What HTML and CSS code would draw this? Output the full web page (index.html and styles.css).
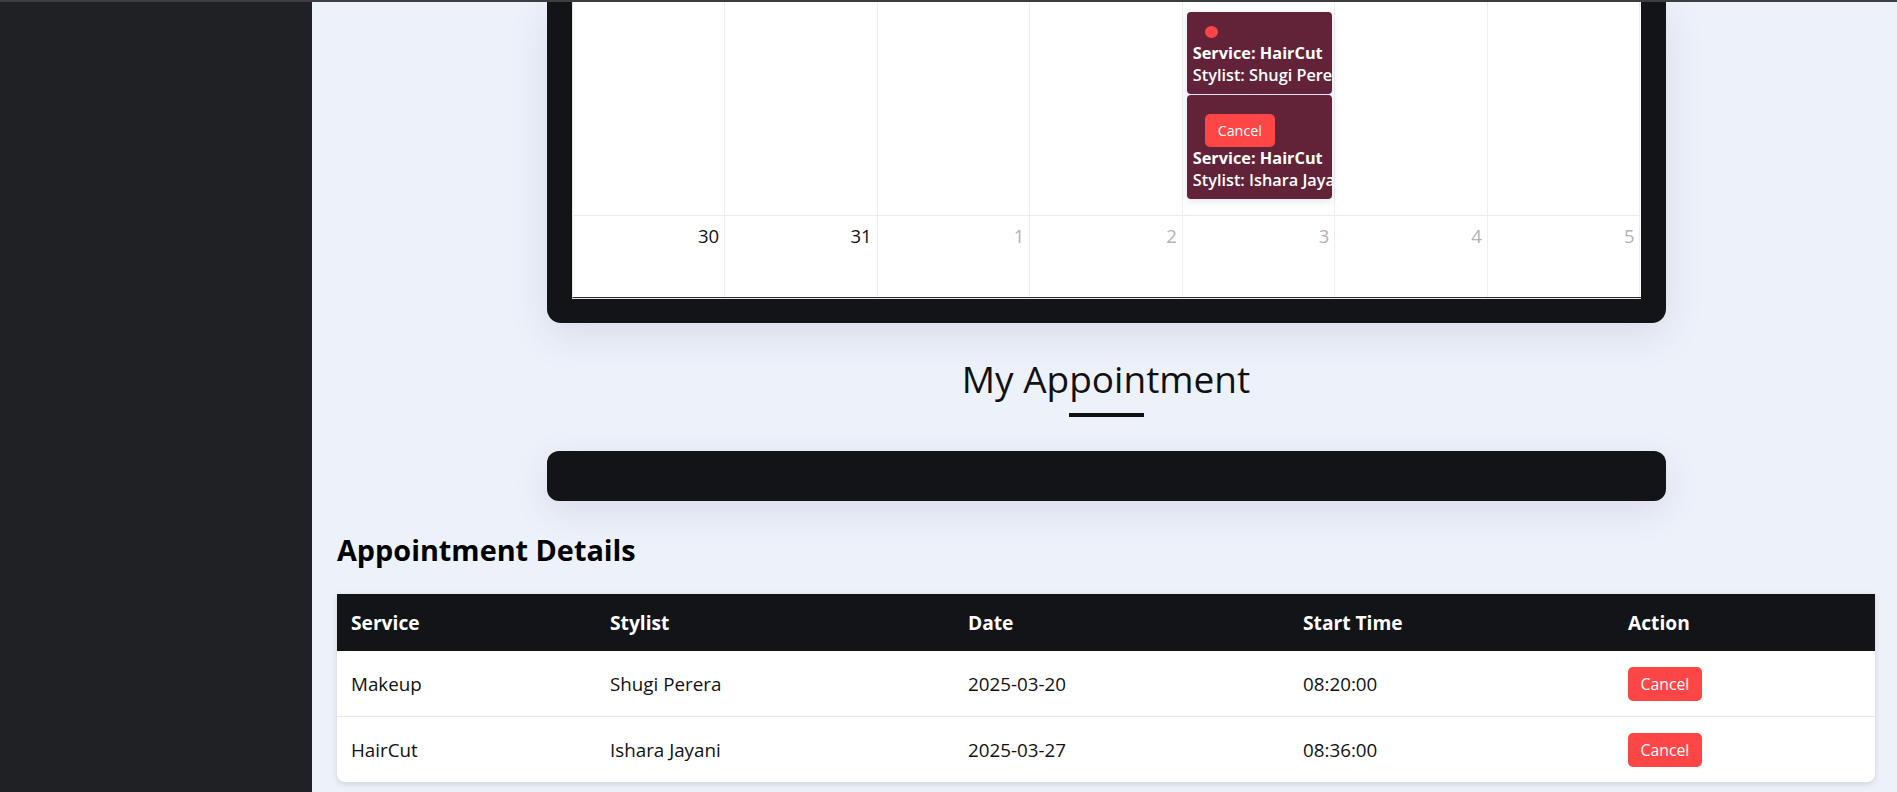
FILE: index.html
```html
<!DOCTYPE html>
<html lang="en">
<head>
<meta charset="utf-8">
<title>My Appointment</title>
<link rel="stylesheet" href="styles.css">
</head>
<body>
<div class="topbar"></div>
<div class="app">
  <aside class="sidebar"></aside>
  <main class="main">
    <section class="cal-frame">
      <div class="cal-grid">
        <div class="cell week-a"></div>
        <div class="cell week-a"></div>
        <div class="cell week-a"></div>
        <div class="cell week-a"></div>
        <div class="cell week-a">
          <div class="event">
            <span class="event-dot"></span>
            <div class="event-line strong">Service: HairCut</div>
            <div class="event-line">Stylist: Shugi Perera</div>
          </div>
          <div class="event">
            <button class="event-btn">Cancel</button>
            <div class="event-line strong">Service: HairCut</div>
            <div class="event-line">Stylist: Ishara Jayani</div>
          </div>
        </div>
        <div class="cell week-a"></div>
        <div class="cell week-a"></div>

        <div class="cell week-b"><span class="daynum">30</span></div>
        <div class="cell week-b"><span class="daynum">31</span></div>
        <div class="cell week-b"><span class="daynum other">1</span></div>
        <div class="cell week-b"><span class="daynum other">2</span></div>
        <div class="cell week-b"><span class="daynum other">3</span></div>
        <div class="cell week-b"><span class="daynum other">4</span></div>
        <div class="cell week-b"><span class="daynum other">5</span></div>
      </div>
    </section>

    <h1 class="page-title">My Appointment</h1>
    <div class="title-line"></div>

    <div class="filter-bar"></div>

    <h2 class="section-title">Appointment Details</h2>

    <div class="table-card">
      <table class="appt-table">
        <colgroup>
          <col class="c-service">
          <col class="c-stylist">
          <col class="c-date">
          <col class="c-time">
          <col class="c-action">
        </colgroup>
        <thead>
          <tr>
            <th>Service</th>
            <th>Stylist</th>
            <th>Date</th>
            <th>Start Time</th>
            <th>Action</th>
          </tr>
        </thead>
        <tbody>
          <tr>
            <td>Makeup</td>
            <td>Shugi Perera</td>
            <td>2025-03-20</td>
            <td>08:20:00</td>
            <td><button class="cancel-btn">Cancel</button></td>
          </tr>
          <tr>
            <td>HairCut</td>
            <td>Ishara Jayani</td>
            <td>2025-03-27</td>
            <td>08:36:00</td>
            <td><button class="cancel-btn">Cancel</button></td>
          </tr>
        </tbody>
      </table>
    </div>

    <h2 class="section-title next">Appointment History</h2>
  </main>
</div>
</body>
</html>
```

FILE: styles.css
```css
* { box-sizing: border-box; }

html, body {
  margin: 0;
  padding: 0;
  height: 100%;
  overflow: hidden;
}

body {
  font-family: "Open Sans", "Noto Sans", Arial, sans-serif;
  color: #111;
  background: #edf1fa;
}

.topbar {
  height: 2px;
  background: #3e3e40;
}

.app {
  display: flex;
  height: 790px;
}

.sidebar {
  width: 312px;
  flex: 0 0 312px;
  background: #202124;
}

.main {
  flex: 1;
  min-width: 0;
  background: #edf1fa;
  padding: 0 22px 0 25px;
  overflow: hidden;
}

/* Calendar */
.cal-frame {
  width: 1119px;
  margin: 0 auto;
  background: #131418;
  padding: 0 25px 25px;
  border-radius: 0 0 14px 14px;
  box-shadow: 0 12px 40px rgba(40, 50, 90, 0.10);
}

.cal-grid {
  display: grid;
  grid-template-columns: repeat(7, minmax(0, 1fr));
  background: #fff;
  border-left: 1px solid #e6e6e6;
  border-bottom: 1px solid #2c2c2c;
  box-shadow: 0 1px 0 #e4e4e4;
}

.cell {
  min-width: 0;
  border-right: 1px solid #eeeeee;
  border-bottom: 1px solid #ebebeb;
}

.week-a {
  height: 214px;
  padding: 10px 2px 0 4px;
}

.week-b {
  height: 81px;
  border-bottom: 0;
  padding: 7px 5px 0;
  text-align: right;
}

.daynum {
  font-size: 18.5px;
  line-height: 25px;
  color: #111;
}

.daynum.other {
  color: #b3b3b3;
}

.event {
  background: #622339;
  border-radius: 4px;
  padding: 4px 0 8px 6px;
  margin-bottom: 1px;
  color: #fff;
  overflow: hidden;
  white-space: nowrap;
  box-shadow: 0 2px 8px rgba(90, 70, 160, 0.16);
}

.event-dot {
  display: block;
  width: 13px;
  height: 12px;
  border-radius: 50%;
  background: #ff4646;
  margin: 10px 0 4px 12px;
}

.event-btn {
  display: block;
  width: 70px;
  height: 33px;
  margin: 15px 0 0 12px;
  padding: 0;
  border: 0;
  border-radius: 5px;
  background: #ff4646;
  color: #fff;
  font-family: inherit;
  font-size: 14.3px;
}

.event-line {
  font-size: 16.3px;
  line-height: 22px;
  font-weight: 600;
  overflow: hidden;
}

.event-line.strong {
  font-weight: 700;
}

/* Headings */
.page-title {
  margin: 31px 0 0;
  text-align: center;
  font-size: 37px;
  font-weight: 500;
  line-height: 50px;
  color: #111;
}

.title-line {
  width: 75px;
  height: 4px;
  background: #111;
  margin: 9px auto 0;
}

.filter-bar {
  width: 1119px;
  height: 50px;
  margin: 34px auto 0;
  background: #131418;
  border-radius: 12px;
  box-shadow: 0 10px 36px rgba(40, 50, 90, 0.10);
}

.section-title {
  margin: 29px 0 0;
  font-size: 28.8px;
  font-weight: 700;
  line-height: 39px;
  color: #000;
}

.section-title.next {
  margin-top: 5px;
  line-height: 32px;
}

/* Table */
.table-card {
  margin-top: 25px;
  background: #fff;
  border-radius: 0 0 8px 8px;
  overflow: hidden;
  box-shadow: 0 2px 6px rgba(0, 0, 0, 0.13);
}

.appt-table {
  width: 100%;
  border-collapse: collapse;
  table-layout: fixed;
}

.c-service { width: 259px; }
.c-stylist { width: 358px; }
.c-date { width: 335px; }
.c-time { width: 325px; }
.c-action { width: 261px; }

.appt-table th {
  background: #131418;
  color: #fff;
  text-align: left;
  font-size: 19.2px;
  font-weight: 700;
  line-height: 26px;
  padding: 15.5px 14px;
}

.appt-table td {
  font-size: 18.8px;
  line-height: 26px;
  padding: 15.5px 14px;
  vertical-align: middle;
  color: #111;
}

.appt-table tbody tr + tr td {
  border-top: 1px solid #e6e6e6;
}

.cancel-btn {
  display: block;
  height: 34px;
  padding: 0 12.5px;
  border: 0;
  border-radius: 5px;
  background: #ff4646;
  color: #fff;
  font-family: inherit;
  font-size: 15.8px;
}
```
